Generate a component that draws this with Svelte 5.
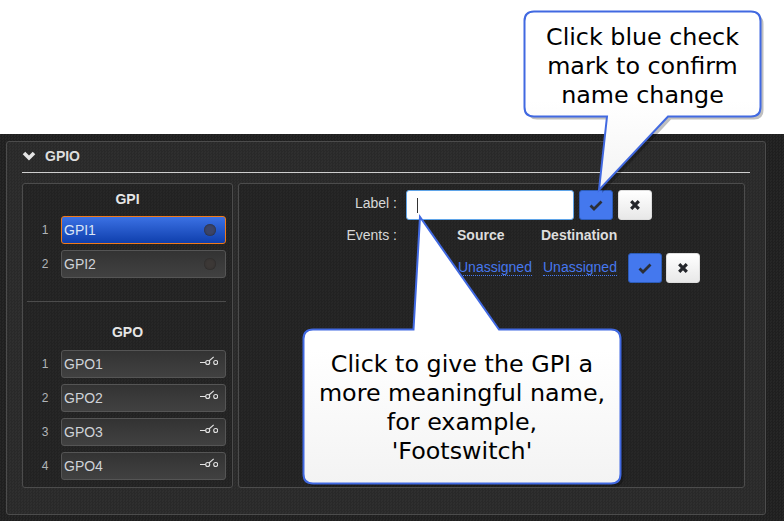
<script lang="ts">
  const gpi = [
    { n: 1, name: 'GPI1', active: true },
    { n: 2, name: 'GPI2', active: false }
  ];
  const gpo = [
    { n: 1, name: 'GPO1' },
    { n: 2, name: 'GPO2' },
    { n: 3, name: 'GPO3' },
    { n: 4, name: 'GPO4' }
  ];
</script>

{#snippet check()}
  <svg class="ico" width="14" height="12" viewBox="0 0 14 12">
    <path d="M1.5 6.5 L5 10 L12.5 2.5" fill="none" stroke="#2b2f38" stroke-width="2.8" />
  </svg>
{/snippet}

{#snippet cross()}
  <svg class="ico" width="12" height="12" viewBox="0 0 12 12">
    <path d="M2.2 2.2 L9.8 9.8 M9.8 2.2 L2.2 9.8" fill="none" stroke="#24262b" stroke-width="3.2" />
  </svg>
{/snippet}

<div class="top"></div>

<main class="page">
  <section class="panel">
    <header class="head">
      <svg width="14" height="10" viewBox="0 0 14 10">
        <path d="M2 2 L7 7 L12 2" fill="none" stroke="#e4e4e4" stroke-width="3.6" />
      </svg>
      <h2>GPIO</h2>
    </header>

    <div class="cols">
      <div class="box left">
        <h3>GPI</h3>
        <div class="list">
          {#each gpi as item}
            <div class="row">
              <span class="num">{item.n}</span>
              <div class="chip" class:active={item.active}>
                <span>{item.name}</span>
                <i class="led"></i>
              </div>
            </div>
          {/each}
        </div>

        <hr />

        <h3 class="gpo-title">GPO</h3>
        <div class="list">
          {#each gpo as item}
            <div class="row">
              <span class="num">{item.n}</span>
              <div class="chip">
                <span>{item.name}</span>
                <svg class="switch" width="18" height="10" viewBox="0 0 18 10">
                  <path d="M0 6.5 H5.7 M9 5 L13.7 0.8" fill="none" stroke="#e2e2e2" stroke-width="1.1" />
                  <circle cx="7.7" cy="6.5" r="2" fill="none" stroke="#e2e2e2" stroke-width="1.1" />
                  <circle cx="15.7" cy="6.5" r="2" fill="none" stroke="#e2e2e2" stroke-width="1.1" />
                </svg>
              </div>
            </div>
          {/each}
        </div>
      </div>

      <div class="box right">
        <div class="label-row">
          <span class="cap">Label :</span>
          <div class="input"><i class="caret"></i></div>
          <button class="btn ok">{@render check()}</button>
          <button class="btn no">{@render cross()}</button>
        </div>
        <div class="events-row">
          <span class="cap">Events :</span>
          <b class="src">Source</b>
          <b class="dst">Destination</b>
        </div>
        <div class="assign-row">
          <a href="#src" class="link">Unassigned</a>
          <a href="#dst" class="link">Unassigned</a>
          <button class="btn ok">{@render check()}</button>
          <button class="btn no">{@render cross()}</button>
        </div>
      </div>
    </div>
  </section>
</main>

<!-- callouts lie over the page, the svg viewBox is in page coordinates -->
<svg class="bubble" width="784" height="521" viewBox="0 0 784 521">
  <defs>
    <linearGradient id="fillA" x1="0" y1="0" x2="0" y2="1">
      <stop offset="0.5" stop-color="#ffffff" />
      <stop offset="1" stop-color="#f3f3f3" />
    </linearGradient>
    <path id="shapeA" d="M534 11.5 H751 Q760.5 11.5 760.5 21 V107 Q760.5 116.5 751 116.5 H668 L599 190 L607 116.5 H534 Q524.5 116.5 524.5 107 V21 Q524.5 11.5 534 11.5 Z" />
    <path id="shapeB" d="M313 329.5 H413.5 L420 217 L499 329.5 H611 Q620.5 329.5 620.5 339 V474 Q620.5 483.5 611 483.5 H313 Q303.5 483.5 303.5 474 V339 Q303.5 329.5 313 329.5 Z" />
  </defs>
  <use href="#shapeA" x="3" y="3" fill="#000" fill-opacity="0.25" />
  <use href="#shapeA" fill="url(#fillA)" stroke="#4169e1" stroke-width="2" />
  <use href="#shapeB" x="3" y="3" fill="#000" fill-opacity="0.25" />
  <use href="#shapeB" fill="url(#fillA)" stroke="#4169e1" stroke-width="2" />
</svg>

<p class="tip tip-a">Click blue check<br />mark to confirm<br />name change</p>
<p class="tip tip-b">Click to give the GPI a<br />more meaningful name,<br />for example,<br />'Footswitch'</p>

<style>
  :global(body) {
    margin: 0;
    background: #fff;
  }

  .top {
    height: 134px;
    background: #fff;
  }

  .page {
    height: 387px;
    box-sizing: border-box;
    padding: 7px 18px 0 6px;
    background: repeating-conic-gradient(#1f1f1f 0 25%, #262626 0 50%) 0 0 / 3px 3px;
    font-family: 'Liberation Sans', Arial, sans-serif;
  }

  .panel {
    height: 374px;
    box-sizing: border-box;
    padding: 0 15px 0 15px;
    border: 1px solid #4c4c4c;
    border-radius: 3px;
    background: repeating-conic-gradient(#292929 0 25%, #2f2f2f 0 50%) 0 0 / 3px 3px;
  }

  .head {
    display: flex;
    align-items: center;
    gap: 9px;
    padding-bottom: 2px;
    box-sizing: border-box;
    height: 31px;
    border-bottom: 1px solid #cfcfcf;
  }

  .head h2 {
    margin: 0;
    font-size: 14px;
    color: #dedede;
  }

  .cols {
    display: flex;
    gap: 5px;
    margin-top: 10px;
  }

  .box {
    box-sizing: border-box;
    height: 305px;
    border: 1px solid #4c4c4c;
    border-radius: 3px;
    background: repeating-conic-gradient(#222 0 25%, #272727 0 50%) 0 0 / 3px 3px;
  }

  .left {
    width: 211px;
    padding: 0 6px 0 4px;
  }

  .right {
    width: 507px;
    color: #ddd;
    font-size: 14px;
  }

  h3 {
    margin: 7px 0 9px;
    padding-left: 2px;
    height: 16px;
    line-height: 16px;
    font-size: 14px;
    text-align: center;
    color: #e6e6e6;
  }

  .gpo-title {
    margin: 22px 0 10px;
  }

  hr {
    margin: 23px 0 0;
    border: 0;
    border-top: 1px solid #4c4c4c;
  }

  .list {
    display: flex;
    flex-direction: column;
    gap: 6px;
  }

  .row {
    display: flex;
    align-items: center;
  }

  .num {
    width: 34px;
    padding-left: 2px;
    box-sizing: border-box;
    text-align: center;
    font-size: 12px;
    color: #b0b4b8;
  }

  .chip {
    flex: 1;
    display: flex;
    align-items: center;
    justify-content: space-between;
    box-sizing: border-box;
    height: 28px;
    padding: 0 9px 0 2px;
    border: 1px solid #555;
    border-radius: 3px;
    font-size: 14px;
    color: #cfd3d8;
    background: linear-gradient(#333, #414141);
  }

  .chip.active {
    border-color: #f07a1a;
    color: #dbe4f5;
    background: linear-gradient(#3b71e4, #0f3fad);
  }

  .led {
    width: 12px;
    height: 12px;
    border-radius: 50%;
    background: #3c3836;
    box-shadow: inset 0 0 2px #222;
  }

  .active .led {
    background: #3b4468;
  }

  .switch {
    margin: 0 -2px 6px 0;
  }

  .label-row {
    display: flex;
    align-items: center;
    margin-top: 6px;
    height: 30px;
  }

  .label-row .cap {
    padding-bottom: 4px;
  }

  .cap {
    box-sizing: border-box;
    width: 158px;
    text-align: right;
    color: #d8d8d8;
  }

  .input {
    box-sizing: border-box;
    width: 168px;
    height: 30px;
    margin: 0 5px 0 9px;
    padding: 7px 10px;
    border: 1px solid #5fa4e8;
    border-radius: 3px;
    background: #fff;
  }

  .caret {
    display: block;
    width: 1px;
    height: 15px;
    background: #333;
  }

  .btn {
    display: flex;
    align-items: center;
    justify-content: center;
    box-sizing: border-box;
    width: 34px;
    height: 30px;
    padding: 0;
    border-radius: 3px;
  }

  .btn.ok {
    border: 1px solid #2c5cb8;
    background: #4478ee;
  }

  .btn.no {
    margin-left: 5px;
    border: 1px solid #ddd;
    background: linear-gradient(#fff, #e8e8e8);
  }

  .assign-row .btn.no {
    margin-left: 4px;
  }

  .events-row {
    display: flex;
    align-items: center;
    margin-top: 7px;
    height: 16px;
  }

  .src {
    margin-left: 60px;
    width: 84px;
  }

  .assign-row {
    display: flex;
    align-items: center;
    margin-top: 10px;
    height: 30px;
    padding-left: 219px;
  }

  .link {
    width: 74px;
    margin: 0 11px 2px 0;
    font-size: 14px;
    line-height: 16px;
    white-space: nowrap;
    color: #4678ee;
    text-decoration: none;
    border-bottom: 1px dotted #4678ee;
  }

  .bubble {
    position: absolute;
    left: 0;
    top: 0;
    pointer-events: none;
  }

  .tip {
    position: absolute;
    margin: 0;
    font-family: 'DejaVu Sans', Verdana, sans-serif;
    font-size: 23.8px;
    line-height: 29px;
    text-align: center;
    color: #000;
  }

  .tip-a {
    left: 524px;
    top: 23px;
    width: 237px;
  }

  .tip-b {
    left: 303px;
    top: 350px;
    width: 318px;
  }
</style>
